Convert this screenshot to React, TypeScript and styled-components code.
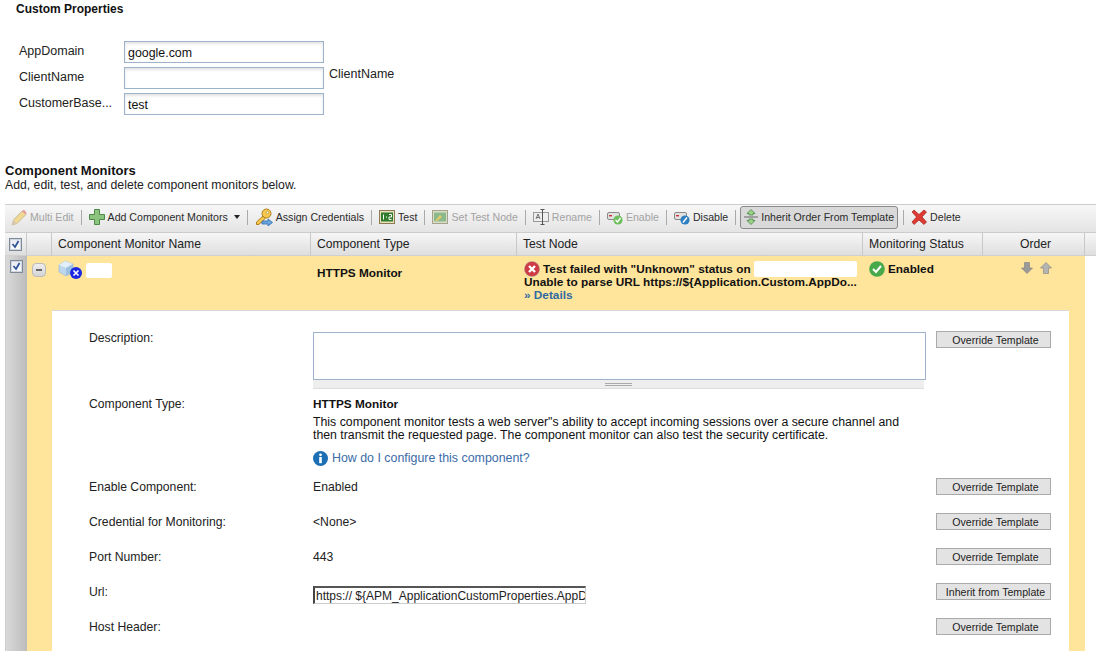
import React from 'react'
import styled, { createGlobalStyle } from 'styled-components'

const Global = createGlobalStyle`
  html, body { margin: 0; padding: 0; background: #fff; overflow: hidden; }
  body { font-family: "Liberation Sans", Arial, sans-serif; font-size: 12px; color: #111; }
`

const Page = styled.div`
  width: 1096px;
  height: 651px;
  overflow: hidden;
`

const PropsSection = styled.section`
  height: 163px;
  padding: 2px 0 0 16px;
  box-sizing: border-box;
`

const PropsTitle = styled.h3`
  margin: 0 0 25px;
  font-size: 12px;
  line-height: 14px;
  font-weight: bold;
`

const PropRow = styled.div`
  display: flex;
  height: 22px;
  margin: 0 0 4px 3px;
`

const PropLabel = styled.div`
  width: 105px;
  font-size: 12.5px;
  line-height: 21px;
  color: #222;
`

const PropInput = styled.input`
  width: 200px;
  height: 22px;
  box-sizing: border-box;
  padding: 2px 3px 0;
  border: 1px solid #9db3cc;
  box-shadow: inset 0 2px 3px #e4e4e4;
  font: 12.4px "Liberation Sans", Arial, sans-serif;
  color: #111;
`

const PropHint = styled.div`
  margin-left: 5px;
  font-size: 12.5px;
  line-height: 14px;
  color: #222;
`

const Head = styled.div`
  padding-left: 5px;
  height: 41px;
`

const HeadTitle = styled.h2`
  margin: 0;
  font-size: 13px;
  line-height: 15px;
  font-weight: bold;
`

const HeadSub = styled.div`
  font-size: 12.25px;
  line-height: 15px;
  color: #222;
`

const Grid = styled.div`
  margin-left: 5px;
  width: 1091px;
`

const Toolbar = styled.div`
  display: flex;
  align-items: center;
  height: 29px;
  box-sizing: border-box;
  padding: 0 0 3px 6px;
  border-top: 1px solid #ccc;
  border-bottom: 1px solid #ccc;
  background: linear-gradient(#f7f7f7, #e4e4e4);
`

const ToolItem = styled.div<{ $off?: boolean }>`
  display: flex;
  align-items: center;
  gap: 3px;
  font-size: 10.6px;
  color: ${p => (p.$off ? '#a3a3a3' : '#2b2b2b')};
  white-space: nowrap;
`

const ToolPressed = styled(ToolItem)`
  height: 21px;
  padding: 0 3px 0 3px;
  margin: 0 -2px 0 -3px;
  border: 1px solid #8a8a8a;
  border-radius: 3px;
  background: #d9d9d9;
`

const ToolSep = styled.div`
  width: 1px;
  height: 15px;
  margin: 0 7px;
  background: #aaa;
`

const Caret = styled.span`
  margin-left: 3px;
  border-top: 4px solid #222;
  border-left: 3.5px solid transparent;
  border-right: 3.5px solid transparent;
`

const HeaderRow = styled.div`
  display: grid;
  grid-template-columns: 22px 25px 259px 206px 346px 120px 102px 11px;
  height: 23px;
`

const HeaderCell = styled.div<{ $center?: boolean }>`
  display: flex;
  align-items: center;
  justify-content: ${p => (p.$center ? 'center' : 'flex-start')};
  padding-left: ${p => (p.$center ? 0 : 6)}px;
  font-size: 12.2px;
  color: #222;
  background: linear-gradient(#f6f6f6, #dedede);
  border-right: 1px solid #c8c8c8;
  border-bottom: 1px solid #d0d0d0;
`

const OrderHeader = styled(HeaderCell)`
  padding-left: 4px;
`

const HeaderEnd = styled(HeaderCell)`
  border-right: none;
  padding: 0;
`

const Check = styled.span`
  display: inline-flex;
  width: 11px;
  height: 11px;
  border: 1px solid #7f8a99;
  background: linear-gradient(#e6e9f0, #fff);
  box-shadow: inset 0 0 0 1px #cfd6e2;
  align-items: center;
  justify-content: center;
`

const MonitorRow = styled.div`
  display: grid;
  grid-template-columns: 22px 1058px;
  height: 395px;
`

const SideStrip = styled.div`
  display: flex;
  justify-content: center;
  padding-top: 4px;
  background: linear-gradient(90deg, #d9d9d9, #bcbcbc);
  border-left: 1px solid #d0d0d0;
`

const MonitorBody = styled.div`
  background: #ffe49c;
`

const Summary = styled.div`
  display: grid;
  grid-template-columns: 25px 259px 206px 346px 120px 102px;
  height: 54px;
  font-weight: bold;
  font-size: 11.8px;
  line-height: 13px;
  color: #111;
`

const Expand = styled.div`
  width: 14px;
  height: 14px;
  margin: 7px 0 0 5px;
  border: 1px solid #bbb;
  border-radius: 4px;
  background: linear-gradient(#eee, #d4d4d4);
  display: flex;
  align-items: center;
  justify-content: center;
  box-sizing: border-box;
  &::after { content: ''; width: 6px; height: 2px; background: #666; }
`

const NameCell = styled.div`
  display: flex;
  padding: 4px 0 0 6px;
`

const Blot = styled.span<{ $w: number; $h: number }>`
  display: inline-block;
  width: ${p => p.$w}px;
  height: ${p => p.$h}px;
  background: #fff;
  border-radius: 2px;
  vertical-align: top;
`

const NameBlot = styled(Blot)`
  margin: 3px 0 0 4px;
`

const TypeCell = styled.div`
  padding: 11px 0 0 6px;
`

const TestCell = styled.div`
  padding: 6px 0 0 7px;
  white-space: nowrap;
`

const TestLine = styled.div`
  display: flex;
  align-items: center;
  height: 14px;
  gap: 3px;
`

const DetailLink = styled.div`
  color: #2f6aa3;
  line-height: 13px;
  margin-top: 0;
`

const StatusCell = styled.div`
  display: flex;
  align-items: flex-start;
  gap: 3px;
  padding: 5px 0 0 6px;
  line-height: 16px;
`

const OrderCell = styled.div`
  display: flex;
  gap: 7px;
  padding: 6px 0 0 38px;
`

const Panel = styled.div`
  margin-left: 25px;
  width: 1017px;
  height: 341px;
  box-sizing: border-box;
  background: #fff;
  border-top: 1px solid #d8d8d8;
  padding-top: 21px;
`

const FieldRow = styled.div<{ $h: number }>`
  display: grid;
  grid-template-columns: 224px 623px 115px;
  padding-left: 37px;
  height: ${p => p.$h}px;
  font-size: 12.2px;
  color: #222;
`

const FieldLabel = styled.div`
  line-height: 14px;
  padding-top: 2px;
`

const DescLabel = styled(FieldLabel)`
  margin-top: -3px;
`

const FieldValue = styled.div`
  line-height: 14px;
  padding-top: 2px;
`

const Override = styled.button`
  width: 115px;
  height: 17px;
  padding: 0 0 0 4px;
  box-sizing: border-box;
  border: 1px solid #aaa;
  background: #e3e3e3;
  font: 10.6px "Liberation Sans", Arial, sans-serif;
  color: #222;
  text-align: center;
`

const DescOverride = styled(Override)`
  margin-top: -1px;
`

const DescBox = styled.div`
  width: 613px;
  height: 48px;
  box-sizing: border-box;
  border: 1px solid #9db3cc;
`

const Resizer = styled.div`
  width: 611px;
  height: 8px;
  background: #eee;
  border-bottom: 1px solid #ddd;
  display: flex;
  justify-content: center;
  align-items: center;
  &::after {
    content: '';
    width: 27px;
    height: 1px;
    border-top: 1px solid #aaa;
    border-bottom: 1px solid #aaa;
  }
`

const TypeName = styled.div`
  font-weight: bold;
  font-size: 11.8px;
  color: #111;
  line-height: 14px;
  margin-bottom: 5px;
`

const TypeDesc = styled.div`
  color: #111;
  font-size: 12.3px;
  line-height: 13px;
  width: 600px;
`

const HelpLine = styled.div`
  display: flex;
  align-items: center;
  gap: 4px;
  margin-top: 9px;
  font-size: 12.4px;
  color: #3b6ca8;
  line-height: 15px;
`

const UrlInput = styled.input`
  width: 273px;
  height: 18px;
  margin-top: 3px;
  box-sizing: border-box;
  padding: 1px 0 0 1px;
  border-style: solid;
  border-width: 2px 1px 1px 2px;
  border-color: #555 #ccc #ccc #444;
  font: 12px "Liberation Sans", Arial, sans-serif;
  color: #222;
`

const Pencil = () => (
  <svg width="16" height="17" viewBox="0 0 16 17">
    <path d="M1 16 L2.5 11 L11 2 L15 5.5 L6 14.5 Z" fill="#f0d890" stroke="#c9bd9c" />
    <path d="M11 2 L13 0.8 L15.5 3.5 L15 5.5 Z" fill="#e79a9a" />
    <path d="M1 16 L2.5 11 L6 14.5 Z" fill="#d8c8b0" />
  </svg>
)

const PlusIcon = () => (
  <svg width="16" height="16" viewBox="0 0 16 16">
    <path d="M5.5 0.5 H10.5 V5.5 H15.5 V10.5 H10.5 V15.5 H5.5 V10.5 H0.5 V5.5 H5.5 Z" fill="#8cc37e" stroke="#4d8a4a" />
  </svg>
)

const KeyIcon = () => (
  <svg width="18" height="18" viewBox="0 0 18 18">
    <circle cx="11.5" cy="5.5" r="4.5" fill="#f6c84f" stroke="#b07f1a" />
    <circle cx="12.5" cy="4.5" r="1.2" fill="#fff" stroke="#b07f1a" strokeWidth=".6" />
    <path d="M8 8 L1.5 14 V16.5 H4 L5 15 L6.5 14.5 L10 10.5 Z" fill="#f6c84f" stroke="#b07f1a" />
    <path d="M7 13 H13 V11 L17.5 14.5 L13 18 V16 H7 Z" fill="#6aa5e0" stroke="#2d6cae" strokeWidth=".8" />
  </svg>
)

const TestIcon = () => (
  <svg width="16" height="14" viewBox="0 0 16 14">
    <rect x=".5" y=".5" width="15" height="13" fill="#eadfc0" stroke="#8c7b4f" />
    <rect x="2" y="2.5" width="12" height="9" fill="#2f7d2a" />
    <path d="M4.5 4.5 V9.5 M10 4.5 H12.5 V7 H10 V9.5 H12.5 M7 7 H8" stroke="#fff" fill="none" />
  </svg>
)

const SetNodeIcon = () => (
  <svg width="16" height="14" viewBox="0 0 16 14">
    <rect x=".5" y=".5" width="15" height="13" fill="#dcdcc8" stroke="#a3a38c" />
    <rect x="2" y="2.5" width="12" height="9" fill="#8ab98a" />
    <path d="M3 11 L8 5 L10 7 L5 11 Z" fill="#e6c96a" />
  </svg>
)

const RenameIcon = () => (
  <svg width="16" height="16" viewBox="0 0 16 16">
    <rect x=".5" y="3.5" width="15" height="9" fill="#eee" stroke="#999" />
    <path d="M9.5 1 V15 M7.5 .5 H11.5 M7.5 15.5 H11.5" stroke="#555" fill="none" />
    <path d="M3 10 L5 5 L7 10 M3.8 8.5 H6.2" stroke="#555" fill="none" strokeWidth=".8" />
  </svg>
)

const ServerIcon = ({ badge, mark }: { badge: string; mark: string }) => (
  <svg width="16" height="15" viewBox="0 0 16 15">
    <rect x=".5" y="2.5" width="12" height="7" rx="1.5" fill="#e2e2e2" stroke="#888" />
    <rect x="2" y="5" width="3" height="1.4" fill="#c33" />
    <circle cx="11" cy="10" r="4.6" fill={badge} />
    <path d={mark} stroke="#fff" strokeWidth="1.4" fill="none" />
  </svg>
)

const OrderIcon = () => (
  <svg width="14" height="16" viewBox="0 0 14 16">
    <path d="M7 0.5 L11 4.5 H9 V6 H5 V4.5 H3 Z" fill="#9ccf8a" stroke="#4d8a4a" strokeWidth=".8" />
    <path d="M0 8 H14" stroke="#666" />
    <path d="M7 15.5 L11 11.5 H9 V10 H5 V11.5 H3 Z" fill="#9ccf8a" stroke="#4d8a4a" strokeWidth=".8" />
  </svg>
)

const DeleteIcon = () => (
  <svg width="16" height="16" viewBox="0 0 16 16">
    <path d="M1 3 L3 1 L8 5.5 L13 1 L15.5 3 L11 8 L15.5 13 L13 15.5 L8 11 L3 15.5 L1 13 L5.5 8 Z" fill="#dc3a32" stroke="#a5231d" strokeWidth=".7" />
  </svg>
)

const CheckMark = () => (
  <svg width="9" height="9" viewBox="0 0 9 9">
    <path d="M1.5 4 L4 7 L7.5 1" stroke="#32549a" strokeWidth="1.8" fill="none" />
  </svg>
)

const MonitorIcon = () => (
  <svg width="24" height="20" viewBox="0 0 24 20">
    <path d="M1 5 L7 1 L15 4 L15 12 L8 16 L1 12 Z" fill="#bcd6ee" stroke="#93b1cc" strokeWidth=".6" />
    <path d="M1 5 L8 8 L15 4 L7 1 Z" fill="#e2eef8" />
    <path d="M8 8 V16 L15 12 V4 Z" fill="#9cc0e2" />
    <circle cx="18" cy="13" r="6" fill="#1a28e0" />
    <path d="M15.5 10.5 L20.5 15.5 M20.5 10.5 L15.5 15.5" stroke="#fff" strokeWidth="1.6" />
  </svg>
)

const ErrorIcon = () => (
  <svg width="16" height="16" viewBox="0 0 16 16">
    <circle cx="8" cy="8" r="7.6" fill="#cf3b45" stroke="#a8a8a8" strokeWidth=".5" />
    <path d="M5 5 L11 11 M11 5 L5 11" stroke="#fff" strokeWidth="2.4" />
  </svg>
)

const OkIcon = () => (
  <svg width="16" height="16" viewBox="0 0 16 16">
    <circle cx="8" cy="8" r="7.8" fill="#47a94a" />
    <path d="M4 8 L7 11 L12 5" stroke="#fff" strokeWidth="2" fill="none" />
  </svg>
)

const ArrowIcon = ({ up }: { up?: boolean }) => (
  <svg width="12" height="12" viewBox="0 0 12 12">
    <path
      d={up ? 'M6 .5 L11.5 6 H8.5 V11.5 H3.5 V6 H.5 Z' : 'M6 11.5 L11.5 6 H8.5 V.5 H3.5 V6 H.5 Z'}
      fill={up ? '#b4b4b4' : '#9a9a9a'}
      stroke="#7d7d7d"
      strokeWidth=".6"
    />
  </svg>
)

const InfoIcon = () => (
  <svg width="15" height="15" viewBox="0 0 15 15">
    <circle cx="7.5" cy="7.5" r="7.5" fill="#1d6fb5" />
    <circle cx="7.5" cy="3.8" r="1.4" fill="#fff" />
    <rect x="6.2" y="6" width="2.6" height="6.2" fill="#fff" />
  </svg>
)

const simpleRows = [
  { label: 'Enable Component:', value: 'Enabled' },
  { label: 'Credential for Monitoring:', value: '<None>' },
  { label: 'Port Number:', value: '443' },
]

export default function App() {
  return (
    <Page>
      <Global />
      <PropsSection>
        <PropsTitle>Custom Properties</PropsTitle>
        <PropRow>
          <PropLabel>AppDomain</PropLabel>
          <PropInput defaultValue="google.com" />
        </PropRow>
        <PropRow>
          <PropLabel>ClientName</PropLabel>
          <PropInput />
          <PropHint>ClientName</PropHint>
        </PropRow>
        <PropRow>
          <PropLabel>CustomerBase...</PropLabel>
          <PropInput defaultValue="test" />
        </PropRow>
      </PropsSection>

      <Head>
        <HeadTitle>Component Monitors</HeadTitle>
        <HeadSub>Add, edit, test, and delete component monitors below.</HeadSub>
      </Head>

      <Grid>
        <Toolbar>
          <ToolItem $off><Pencil />Multi Edit</ToolItem>
          <ToolSep />
          <ToolItem><PlusIcon />Add Component Monitors<Caret /></ToolItem>
          <ToolSep />
          <ToolItem><KeyIcon />Assign Credentials</ToolItem>
          <ToolSep />
          <ToolItem><TestIcon />Test</ToolItem>
          <ToolSep />
          <ToolItem $off><SetNodeIcon />Set Test Node</ToolItem>
          <ToolSep />
          <ToolItem $off><RenameIcon />Rename</ToolItem>
          <ToolSep />
          <ToolItem $off><ServerIcon badge="#6fbf5f" mark="M8.5 10 L10.5 12 L13.5 8" />Enable</ToolItem>
          <ToolSep />
          <ToolItem><ServerIcon badge="#2f7fc0" mark="M9 12.5 L13 7.5" />Disable</ToolItem>
          <ToolSep />
          <ToolPressed><OrderIcon />Inherit Order From Template</ToolPressed>
          <ToolSep />
          <ToolItem><DeleteIcon />Delete</ToolItem>
        </Toolbar>

        <HeaderRow>
          <HeaderCell $center><Check><CheckMark /></Check></HeaderCell>
          <HeaderCell />
          <HeaderCell>Component Monitor Name</HeaderCell>
          <HeaderCell>Component Type</HeaderCell>
          <HeaderCell>Test Node</HeaderCell>
          <HeaderCell>Monitoring Status</HeaderCell>
          <OrderHeader $center>Order</OrderHeader>
          <HeaderEnd />
        </HeaderRow>

        <MonitorRow>
          <SideStrip><Check><CheckMark /></Check></SideStrip>
          <MonitorBody>
            <Summary>
              <Expand />
              <NameCell><MonitorIcon /><NameBlot $w={26} $h={15} /></NameCell>
              <TypeCell>HTTPS Monitor</TypeCell>
              <TestCell>
                <TestLine><ErrorIcon />Test failed with "Unknown" status on <Blot $w={103} $h={16} /></TestLine>
                <div>Unable to parse URL https://${'{'}Application.Custom.AppDo...</div>
                <DetailLink>» Details</DetailLink>
              </TestCell>
              <StatusCell><OkIcon />Enabled</StatusCell>
              <OrderCell><ArrowIcon /><ArrowIcon up /></OrderCell>
            </Summary>

            <Panel>
              <FieldRow $h={63}>
                <DescLabel>Description:</DescLabel>
                <div>
                  <DescBox />
                  <Resizer />
                </div>
                <DescOverride>Override Template</DescOverride>
              </FieldRow>
              <FieldRow $h={83}>
                <FieldLabel>Component Type:</FieldLabel>
                <FieldValue>
                  <TypeName>HTTPS Monitor</TypeName>
                  <TypeDesc>
                    This component monitor tests a web server"s ability to accept incoming sessions over a secure channel and then transmit the requested page. The component monitor can also test the security certificate.
                  </TypeDesc>
                  <HelpLine><InfoIcon />How do I configure this component?</HelpLine>
                </FieldValue>
              </FieldRow>
              {simpleRows.map(r => (
                <FieldRow $h={35} key={r.label}>
                  <FieldLabel>{r.label}</FieldLabel>
                  <FieldValue>{r.value}</FieldValue>
                  <Override>Override Template</Override>
                </FieldRow>
              ))}
              <FieldRow $h={35}>
                <FieldLabel>Url:</FieldLabel>
                <div><UrlInput defaultValue="https:// ${APM_ApplicationCustomProperties.AppDomain}" /></div>
                <Override>Inherit from Template</Override>
              </FieldRow>
              <FieldRow $h={35}>
                <FieldLabel>Host Header:</FieldLabel>
                <div />
                <Override>Override Template</Override>
              </FieldRow>
            </Panel>
          </MonitorBody>
        </MonitorRow>
      </Grid>
    </Page>
  )
}
